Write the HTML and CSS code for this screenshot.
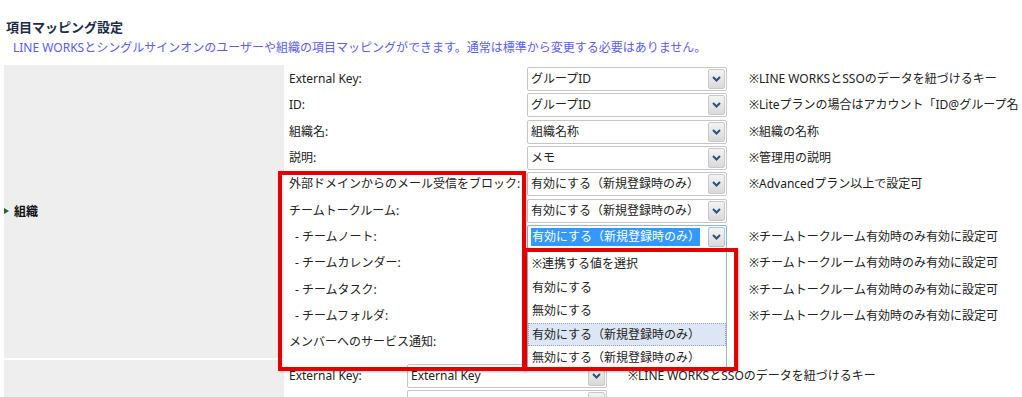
FILE: index.html
```html
<!DOCTYPE html>
<html lang="ja">
<head>
<meta charset="utf-8">
<title>項目マッピング設定</title>
<link rel="stylesheet" href="styles.css">
</head>
<body>
<h2 class="title">項目マッピング設定</h2>
<p class="desc">LINE WORKSとシングルサインオンのユーザーや組織の項目マッピングができます。通常は標準から変更する必要はありません。</p>

<div class="table">
  <div class="section">
    <div class="sec-head"><span class="tri"></span>組織</div>
    <div class="sec-body org">
      <span class="lbl">External Key:</span>
      <span class="sel"><span class="sel-text">グループID</span><span class="sel-btn"><svg width="9" height="6" viewBox="0 0 9 6"><polyline points="1,1 4.5,4.5 8,1" fill="none" stroke="#2d4f82" stroke-width="2"/></svg></span></span>
      <span class="note">※LINE WORKSとSSOのデータを紐づけるキー</span>

      <span class="lbl">ID:</span>
      <span class="sel"><span class="sel-text">グループID</span><span class="sel-btn"><svg width="9" height="6" viewBox="0 0 9 6"><polyline points="1,1 4.5,4.5 8,1" fill="none" stroke="#2d4f82" stroke-width="2"/></svg></span></span>
      <span class="note">※Liteプランの場合はアカウント「ID@グループ名</span>

      <span class="lbl">組織名:</span>
      <span class="sel"><span class="sel-text">組織名称</span><span class="sel-btn"><svg width="9" height="6" viewBox="0 0 9 6"><polyline points="1,1 4.5,4.5 8,1" fill="none" stroke="#2d4f82" stroke-width="2"/></svg></span></span>
      <span class="note">※組織の名称</span>

      <span class="lbl">説明:</span>
      <span class="sel"><span class="sel-text">メモ</span><span class="sel-btn"><svg width="9" height="6" viewBox="0 0 9 6"><polyline points="1,1 4.5,4.5 8,1" fill="none" stroke="#2d4f82" stroke-width="2"/></svg></span></span>
      <span class="note">※管理用の説明</span>

      <span class="lbl">外部ドメインからのメール受信をブロック:</span>
      <span class="sel"><span class="sel-text">有効にする（新規登録時のみ）</span><span class="sel-btn"><svg width="9" height="6" viewBox="0 0 9 6"><polyline points="1,1 4.5,4.5 8,1" fill="none" stroke="#2d4f82" stroke-width="2"/></svg></span></span>
      <span class="note">※Advancedプラン以上で設定可</span>

      <span class="lbl">チームトークルーム:</span>
      <span class="sel"><span class="sel-text">有効にする（新規登録時のみ）</span><span class="sel-btn"><svg width="9" height="6" viewBox="0 0 9 6"><polyline points="1,1 4.5,4.5 8,1" fill="none" stroke="#2d4f82" stroke-width="2"/></svg></span></span>
      <span class="note"></span>

      <span class="lbl sub">- チームノート:</span>
      <span class="sel focus"><span class="sel-text">有効にする（新規登録時のみ）</span><span class="sel-btn"><svg width="9" height="6" viewBox="0 0 9 6"><polyline points="1,1 4.5,4.5 8,1" fill="none" stroke="#2d4f82" stroke-width="2"/></svg></span></span>
      <span class="note">※チームトークルーム有効時のみ有効に設定可</span>

      <span class="lbl sub">- チームカレンダー:</span>
      <span class="sel covered"><span class="sel-text">有効にする（新規登録時のみ）</span><span class="sel-btn"></span></span>
      <span class="note">※チームトークルーム有効時のみ有効に設定可</span>

      <span class="lbl sub">- チームタスク:</span>
      <span class="sel covered"><span class="sel-text">有効にする（新規登録時のみ）</span><span class="sel-btn"></span></span>
      <span class="note">※チームトークルーム有効時のみ有効に設定可</span>

      <span class="lbl sub">- チームフォルダ:</span>
      <span class="sel covered"><span class="sel-text">有効にする（新規登録時のみ）</span><span class="sel-btn"></span></span>
      <span class="note">※チームトークルーム有効時のみ有効に設定可</span>

      <span class="lbl">メンバーへのサービス通知:</span>
      <span class="sel covered"><span class="sel-text">有効にする（新規登録時のみ）</span><span class="sel-btn"></span></span>
      <span class="note"></span>
    </div>
  </div>

  <div class="section">
    <div class="sec-head"></div>
    <div class="sec-body user">
      <span class="lbl">External Key:</span>
      <span class="sel"><span class="sel-text">External Key</span><span class="sel-btn"><svg width="9" height="6" viewBox="0 0 9 6"><polyline points="1,1 4.5,4.5 8,1" fill="none" stroke="#2d4f82" stroke-width="2"/></svg></span></span>
      <span class="note">※LINE WORKSとSSOのデータを紐づけるキー</span>

      <span class="lbl"></span>
      <span class="sel"><span class="sel-text"></span><span class="sel-btn"></span></span>
      <span class="note"></span>
    </div>
  </div>
</div>

<ul class="dropdown">
  <li>※連携する値を選択</li>
  <li>有効にする</li>
  <li>無効にする</li>
  <li class="hover">有効にする（新規登録時のみ）</li>
  <li>無効にする（新規登録時のみ）</li>
</ul>

<div class="redbox box-labels"></div>
<div class="redbox box-list"></div>
</body>
</html>
```

FILE: styles.css
```css
* { box-sizing: border-box; }

html, body {
  margin: 0;
  padding: 0;
  background: #fff;
  overflow: hidden;
}

body {
  position: relative;
  width: 1022px;
  height: 397px;
  font-family: "Noto Sans", "Noto Sans CJK JP", sans-serif;
  font-size: 12px;
  color: #222;
}

.title {
  margin: 0;
  padding: 17px 0 0 6px;
  font-size: 13px;
  line-height: 20px;
  font-weight: bold;
  color: #1b2b46;
}

.desc {
  margin: 0;
  padding: 3px 0 0 13px;
  line-height: 16px;
  color: #5a5cf2;
  white-space: nowrap;
}

.table {
  margin: 9px 0 0 4px;
  display: flex;
  flex-direction: column;
  gap: 2px;
}

.section {
  display: flex;
}

.sec-head {
  width: 280px;
  flex: none;
  background: #eee;
  display: flex;
  align-items: center;
  font-weight: bold;
  color: #111;
}

.tri {
  width: 0;
  height: 0;
  border-left: 5px solid #24613a;
  border-top: 3.5px solid transparent;
  border-bottom: 3.5px solid transparent;
  margin-right: 5px;
}

.sec-body {
  flex: 1;
  display: grid;
  grid-auto-rows: 26.33px;
  align-items: center;
  white-space: nowrap;
}

.sec-body.org {
  grid-template-columns: 243px 222px 1fr;
  padding: 1px 0 2px;
}

.sec-body.user {
  grid-template-columns: 123px 221px 1fr;
  padding: 3px 0 0;
}

.lbl {
  padding-left: 5px;
  line-height: 16px;
}

.lbl.sub {
  padding-left: 11px;
}

.note {
  line-height: 16px;
  overflow: hidden;
}

.sel {
  display: flex;
  width: 200px;
  height: 24px;
  border: 1px solid #c4c6cb;
  border-radius: 2px;
  background: #fff;
}

.sel.covered .sel-text {
  visibility: hidden;
}

.sel-text {
  flex: 1;
  padding-left: 3px;
  line-height: 22px;
  overflow: hidden;
}

.sel-btn {
  width: 17px;
  flex: none;
  margin: 1px 1px 1px 0;
  border: 1px solid #c8c8c8;
  border-radius: 2px;
  background: linear-gradient(#f4f4f4, #d9d9d9);
  display: flex;
  align-items: center;
  justify-content: center;
}

.sel.focus {
  border-color: #8db2df;
}

.sel.focus .sel-text {
  margin: 2px 8px 2px 3px;
  padding-left: 1px;
  line-height: 18px;
  background: #3399ff;
  color: #fff;
}

.sel.focus .sel-btn {
  border-color: #a9c3e4;
}

.dropdown {
  position: absolute;
  left: 527px;
  top: 249px;
  width: 200px;
  height: 122px;
  margin: 0;
  padding: 2px 0 0;
  list-style: none;
  background: #fff;
  border: 1px solid #a3b1c6;
}

.dropdown li {
  height: 23.5px;
  line-height: 21.5px;
  padding-left: 3px;
  white-space: nowrap;
  border: 1px solid transparent;
}

.dropdown li.hover {
  background: #dce6f4;
  border: 1px dotted #8ea6c9;
}

.redbox {
  position: absolute;
  border: 4px solid #e30000;
  box-shadow: 1px 1px 2px rgba(0, 0, 0, 0.25);
}

.box-labels {
  left: 278px;
  top: 171px;
  width: 248px;
  height: 200px;
}

.box-list {
  left: 523px;
  top: 248px;
  width: 215px;
  height: 123px;
}
```
